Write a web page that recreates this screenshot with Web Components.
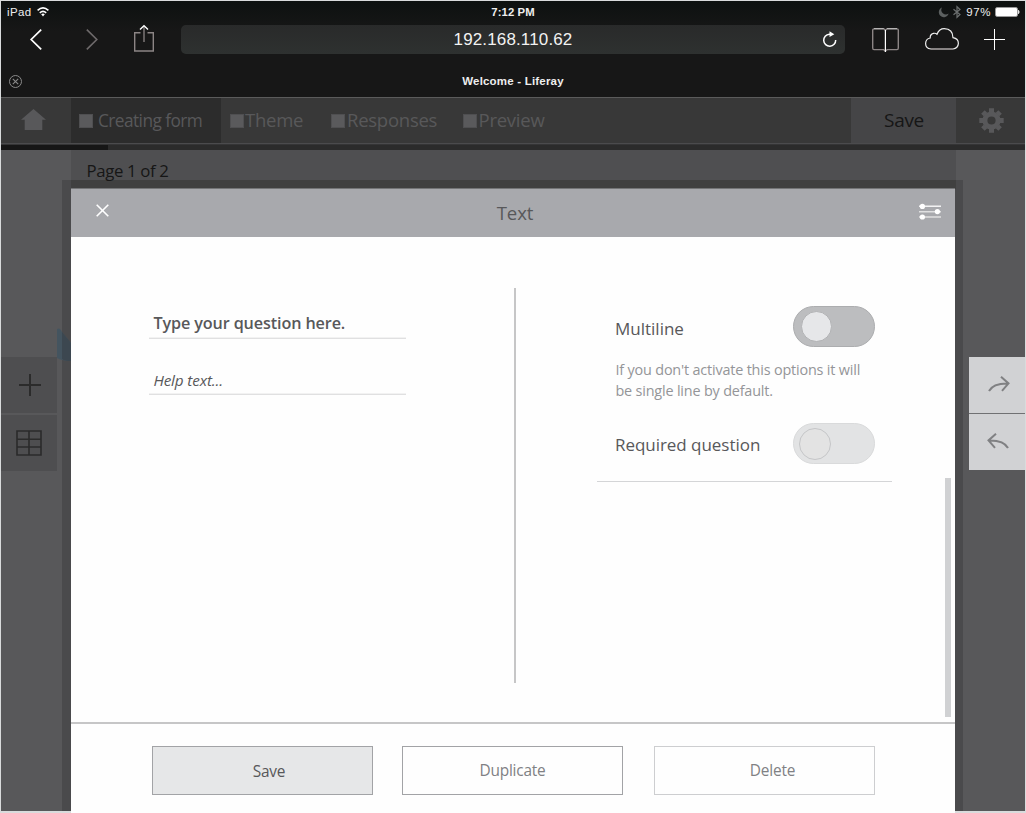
<!DOCTYPE html>
<html lang="en">
<head>
<meta charset="utf-8">
<title>Welcome - Liferay</title>
<style>
html,body{margin:0;height:100%;overflow:hidden;background:#d9dbdc}
body{font-family:"Open Sans","Noto Sans",sans-serif}
</style>
</head>
<body>
<form-screen></form-screen>
<script>
const define = (name, html) => customElements.define(name, class extends HTMLElement {
  constructor() {
    super();
    const t = document.createElement('template');
    t.innerHTML = '<style>*{box-sizing:border-box}:host{box-sizing:border-box;display:block}svg{display:block;overflow:visible;fill:none}</style>' + html;
    this.attachShadow({mode: 'open'}).append(t.content.cloneNode(true));
  }
});

define('status-bar', `
<style>
:host{display:grid;grid-template-columns:1fr auto 1fr;height:22px;align-items:center;font:11.5px/22px "Liberation Sans",Arial,sans-serif;color:#eee;padding:0 6px}
.l,.r{display:flex;align-items:center}
.l{gap:6px;letter-spacing:.35px}
.r{justify-content:flex-end}
.t{font-weight:bold;font-size:11.3px;letter-spacing:.1px}
.p{margin:0 4px 0 5px;letter-spacing:.6px}
</style>
<div class="l"><span>iPad</span>
<svg width="12" height="10" viewBox="0 0 12 10" stroke="#fff" stroke-width="1.6"><path d="M.6 3.4Q6-1.6 11.4 3.4M2.8 5.8Q6 3 9.2 5.8"/><path d="M4.2 7.2Q6 5.8 7.8 7.2L6 9.4Z" fill="#fff" stroke="none"/></svg></div>
<span class="t">7:12 PM</span>
<div class="r">
<svg width="10" height="10" viewBox="0 0 10 10"><path d="M3 .5A5 5 0 1 0 9.6 6.6A4.6 4.6 0 0 1 3 .5Z" fill="#5c6060"/></svg>
<svg width="8" height="12" viewBox="0 0 8 12" stroke="#6c7070" stroke-width="1.2" style="margin-left:4px"><path d="M.5 3.2L7 8.5L4 11.3V.7L7 3.5L.5 8.8"/></svg>
<span class="p">97%</span>
<svg width="25" height="10" viewBox="0 0 25 10" style="margin-right:-1px"><rect x=".5" y=".5" width="22" height="9" rx="1.5" stroke="#999"/><rect x="1" y="1" width="21" height="8" rx=".8" fill="#fff"/><path d="M23.5 3.2Q25 5 23.5 6.8Z" fill="#fff" stroke="#fff" stroke-width=".7"/></svg>
</div>`);

define('address-bar', `
<style>
:host{display:grid;grid-template-columns:24px 1fr 24px;align-items:center;height:29px;border-radius:5px;background:linear-gradient(#292a2a,#2e3130);font:17px/29px "Liberation Sans",Arial,sans-serif;color:#f2f2f2;text-align:center}
span{grid-column:2;letter-spacing:.14px}
</style>
<span><slot></slot></span>
<svg width="16" height="17" viewBox="0 0 16 17" stroke="#fff" stroke-width="1.5" style="margin-left:1px"><path d="M8.2 3.2H7.3A6 6 0 1 0 13.7 9"/><path d="M7.5 .3L12.3 3.2L7.5 6Z" fill="#fff" stroke="none"/></svg>`);

define('browser-toolbar', `
<style>
:host{display:grid;grid-template-columns:180px 664px 1fr;height:30px;padding-top:2px}
.l,.r{display:flex;align-items:flex-start}
.l{padding-left:29px}
</style>
<div class="l">
<svg width="12" height="21" viewBox="0 0 12 21" stroke="#fff" stroke-width="1.7" style="margin-top:4px"><path d="M11.2 .6L1.2 10.5L11.2 20.4"/></svg>
<svg width="12" height="21" viewBox="0 0 12 21" stroke="#6e6a6b" stroke-width="1.6" style="margin:4px 0 0 44px"><path d="M.8 .6L10.8 10.5L.8 20.4"/></svg>
<svg width="20" height="27" viewBox="0 0 20 27" stroke="#8c8585" stroke-width="1.4" style="margin-left:36px"><path d="M6.5 7.7H.7V26H19.3V7.7H13.5"/><path d="M10 1.5V17" stroke-width="1.3"/><path d="M6 4.5L10 .8L14 4.5" stroke="#fff"/></svg>
</div>
<address-bar>192.168.110.62</address-bar>
<div class="r">
<svg width="27" height="25" viewBox="0 0 27 25" stroke="#8c8585" stroke-width="1.4" style="margin:3px 0 0 27px"><path d="M13.4 2.2L12 .9H2Q.7 .9 .7 2.3V20Q.7 21.6 2 21.6H11.6L13.4 23L15.2 21.6H25Q26.3 21.6 26.3 20V2.3Q26.3 .9 25 .9H14.8Z"/><path d="M13.4 2V24" stroke="#fff" stroke-width="1.2"/><path d="M2 .7H11.8M15 .7H25" stroke="#ddd" stroke-width=".8"/></svg>
<svg width="34" height="22" viewBox="0 0 34 22" stroke="#eee" stroke-width="1.2" style="margin:3px 0 0 26px"><path d="M6 21Q.6 20.4 .6 15.5Q.8 10.8 5.2 10Q5 6.3 8.4 5.4Q10.6 4.9 12 6.2Q14.2 .7 19.2 .7Q27.8 .8 28 9.7Q33.4 10.6 33.4 15.4Q33 20.5 28 21Z"/><path d="M6 21H28" stroke="#8c8585"/></svg>
<svg width="22" height="22" viewBox="0 0 22 22" stroke="#fff" stroke-width="1" style="margin:4px 0 0 25px"><path d="M0 10.5H21M10.5 0V21"/></svg>
</div>`);

define('tab-strip', `
<style>
:host{display:grid;grid-template-columns:40px 1fr 40px;align-items:center;height:31px;font:bold 11.5px/31px "Liberation Sans",Arial,sans-serif;color:#eee;text-align:center}
svg{margin-left:8px}
span{letter-spacing:.2px}
</style>
<svg width="13" height="13" viewBox="0 0 13 13" stroke="#8a8a8a"><circle cx="6.5" cy="6.5" r="6"/><path d="M3.8 3.8L9.2 9.2M9.2 3.8L3.8 9.2" stroke-width="1.1"/></svg>
<span><slot></slot></span>`);

define('browser-chrome', `
<style>:host{height:96px;background:linear-gradient(#0d1110,#171717 30px)}tab-strip{margin-top:13px}</style>
<status-bar></status-bar><browser-toolbar></browser-toolbar><tab-strip>Welcome - Liferay</tab-strip>`);

define('nav-step', `
<style>
:host{display:flex;align-items:center;height:45px;font-size:18.5px;color:#58585a;white-space:nowrap}
i{width:14px;height:14px;background:#5a5a5c;border:1px solid #4f4f51;flex:none}
.text{height:45px}
</style><i></i><div class="text"><slot></slot></div>`);

define('app-nav', `
<style>
:host{display:grid;grid-template-columns:70px 150px 630px 105px 1fr;height:47px;background:#383838;border-top:1px solid #5b5b5b;border-bottom:1px solid #4b4b4d}
svg{align-self:start}
.first{background:#2c2c2c;padding:0 0 0 8px}
.first nav-step{font-size:17.3px;letter-spacing:-.56px;line-height:46px}
.rest{display:flex;align-items:center}
.rest nav-step{letter-spacing:-.25px;line-height:43px}
.save{background:#454547;color:#161616;font-size:19px;letter-spacing:-.3px;line-height:44px;text-align:center;padding-left:1px}
b{font-weight:400;padding-left:5px}
</style>
<svg width="25" height="22" viewBox="0 0 25 22" style="margin:11px 0 0 20px"><path d="M12.5 0L25 10.7H21.3V21H3.7V10.7H0Z" fill="#58585a"/></svg>
<div class="first"><nav-step><b>Creating form</b></nav-step></div>
<div class="rest"><nav-step style="width:101px;padding-left:9px"><span style="padding-left:1px">Theme</span></nav-step><nav-step style="width:132px;padding-left:9px"><span style="padding-left:2px">Responses</span></nav-step><nav-step style="padding-left:8.5px"><span style="padding-left:2px">Preview</span></nav-step></div>
<div class="save">Save</div>
<svg width="25" height="25" viewBox="-12.5 -12.5 25 25" style="margin:10px 0 0 22.5px" stroke="#58585a"><circle r="6.6" stroke-width="5"/><path d="M0-8V-12.2M0 8V12.2M-8 0H-12.2M8 0H12.2M-6-6L-8.6-8.6M6 6L8.6 8.6M-6 6L-8.6 8.6M6-6L8.6-8.6" stroke-width="5" stroke-linejoin="round"/></svg>`);

define('progress-line', `
<style>:host{height:6px;background:#2b2b2b;border-top:1px solid #353536}div{width:107px;height:5px;background:#161616}</style><div></div>`);

define('side-tools', `
<style>
:host{display:flex;flex-direction:column;gap:2px;width:56px;padding-top:207px}
div{height:56px;background:#4e4e50;display:grid;place-items:center}
</style>
<div><svg width="22" height="22" viewBox="0 0 22 22" stroke="#2b2b2b" stroke-width="2" style="margin-left:2px"><path d="M0 11H22M11 0V22"/></svg></div>
<div><svg width="26" height="26" viewBox="0 0 26 26" stroke="#2b2b2b" stroke-width="1.6"><path d="M1 1H25V25H1ZM13 1V25M1 9.3H25M1 17H25"/></svg></div>`);

define('history-tools', `
<style>
:host{display:flex;flex-direction:column;gap:1px;width:56px;margin:207px 0 0 auto;background:#707173;height:113px}
div{height:56px;background:#d1d2d4;display:grid;place-items:center;padding-left:3px}
</style>
<div><svg width="22" height="16" viewBox="0 0 22 16" stroke="#808183" stroke-width="2" style="margin-top:-2px"><path d="M1 15Q5 7 20.5 7.4M13 .8L20.5 7.4L14 14.8"/></svg></div>
<div><svg width="22" height="16" viewBox="0 0 22 16" stroke="#808183" stroke-width="2" style="margin:-3px 2px 0 0"><path d="M21 15Q17 7 1.5 7.4M9 .8L1.5 7.4L8 14.8"/></svg></div>`);

define('toggle-switch', `
<style>
:host{width:82px;height:41px;border-radius:21px;background:#bcbdbf;border:1px solid #acadaf;padding:4px 0 0 6.5px}
i{display:block;width:31px;height:31px;border-radius:50%;background:#e6e7e9;border:1px solid #b2b3b5}
:host([muted]){background:#e2e3e4;border-color:#d9dadb;padding:4px 0 0 5px}
:host([muted]) i{width:32px;height:32px;background:#e3e3e3;border-color:#c5c6c8}
</style><i></i>`);

define('line-field', `
<style>:host{width:257px;height:29px;border-bottom:1px solid #e0e0e1;box-shadow:inset 0 -1px #f2f2f2;color:#58585a;font-size:16.2px;letter-spacing:-.12px;line-height:26px;padding-left:4.4px;white-space:nowrap}</style><slot></slot>`);

define('action-button', `
<style>:host{width:221px;height:49px;border:1px solid #a2a3a6;color:#808184;font-size:15.4px;letter-spacing:-.2px;line-height:47px;text-align:center;background:#fefefe}
:host([primary]){background:#e6e7e8;color:#58585a;line-height:49px;padding-left:13px}
:host([faint]){border-color:#cdced0;padding-left:16px}</style><slot></slot>`);

define('question-dialog', `
<style>
:host{display:flex;flex-direction:column;background:#fefefe}
header{display:grid;grid-template-columns:70px 1fr 69px;height:49px;background:#a8a9ad;border-top:1px solid #747577;color:#58585a;font-size:18.6px;letter-spacing:-.1px;line-height:48px;text-align:center}
main{height:485px;display:grid;grid-template-columns:444px 1fr 10px;padding-top:51px}
.left{border-right:2px solid #c6c6c7;height:395px;padding:22px 0 0 78px;display:flex;flex-direction:column;gap:27px;width:445px}
.right{padding:18px 0 0 82px}
.row{display:flex;width:295px;padding:0 17px 0 18px;justify-content:space-between;align-items:flex-start;color:#58585a;font-size:17px;line-height:45px;white-space:nowrap}
p{margin:0;padding-left:18.5px;color:#949598;font-size:14.4px;letter-spacing:-.18px;line-height:21px;height:64px;padding-top:12px;white-space:nowrap}
.row toggle-switch{flex:none}
.ml{height:41px}
.req{margin-top:12px;border-bottom:1px solid #d4d5d7;height:59px;line-height:43px;letter-spacing:-.04px}
.bar{height:239px;width:6px;background:#d0d1d3;margin-top:190px}
footer{border-top:2px solid #c6c6c7;flex:1;display:flex;padding:22px 0 0 81px}
</style>
<header>
<svg width="13" height="13" viewBox="0 0 13 13" stroke="#fff" stroke-width="1.6" style="margin:15px 0 0 25px"><path d="M.7 .7L12.3 12.3M12.3 .7L.7 12.3"/></svg>
<span style="padding-left:3px">Text</span>
<svg width="22" height="16" viewBox="0 0 22 16" stroke="#fff" style="margin:15px 0 0 33px"><path d="M0 2.2H22" stroke-width="1.3"/><path d="M0 7.8H22" stroke-width="1.2" stroke="#eee"/><path d="M0 13H22" stroke-width="1.6" stroke="#ddd"/><g fill="#fff" stroke="none"><circle cx="3.4" cy="2.4" r="2.6"/><circle cx="18.4" cy="7.6" r="2.6"/><circle cx="3.4" cy="13" r="2.6"/></g></svg>
</header>
<main>
<div class="left"><line-field style="font-weight:600">Type your question here.</line-field><line-field style="font-style:italic;font-size:15.3px;letter-spacing:-.15px;line-height:28px">Help text...</line-field></div>
<div class="right">
<div class="row ml"><span>Multiline</span><toggle-switch></toggle-switch></div>
<p>If you don't activate this options it will<br>be single line by default.</p>
<div class="row req"><span>Required question</span><toggle-switch muted></toggle-switch></div>
</div>
<div class="bar"></div>
</main>
<footer><action-button primary>Save</action-button><action-button style="margin-left:29px">Duplicate</action-button><action-button faint style="margin-left:31px">Delete</action-button></footer>`);

define('form-canvas', `
<style>
:host{display:grid;grid-template-columns:70px 885px 1fr;height:661px;background:#58585a;position:relative}
.page{background:#4f4f51;color:#161616;font-size:16.8px;letter-spacing:-.35px;line-height:42px;padding-left:15.5px}
.page span{position:relative;z-index:1}
.shade{position:absolute;left:61px;top:30px;width:901px;bottom:0;background:#4a4a4c}
.shade::before{content:"";position:absolute;left:9px;top:0;width:885px;height:9px;background:#404040}
.blob{position:absolute;left:56px;top:178px}
question-dialog{position:absolute;left:70px;top:38px;width:884px;bottom:-2px}
side-tools,history-tools{position:relative}
</style>
<side-tools></side-tools>
<div class="page"><span>Page 1 of 2</span></div>
<history-tools></history-tools>
<div class="shade"></div>
<svg class="blob" width="14" height="33" viewBox="0 0 14 33"><path d="M0 1Q3-1 5 4L14 15V33Q5 33 0 30Z" fill="#44545f"/><path d="M5 4L14 15V33Q8 33 5 31Z" fill="#3c4750"/></svg>
<question-dialog></question-dialog>`);

define('form-screen', `
<style>:host{width:1026px;height:813px;padding:1px 1px 2px;overflow:hidden}</style>
<browser-chrome></browser-chrome><app-nav></app-nav><progress-line></progress-line><form-canvas></form-canvas>`);
</script>
</body>
</html>
